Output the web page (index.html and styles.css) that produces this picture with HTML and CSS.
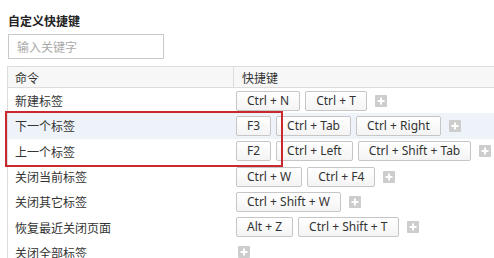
FILE: index.html
```html
<!DOCTYPE html>
<html lang="zh-CN">
<head>
<meta charset="utf-8">
<title>自定义快捷键</title>
<link rel="stylesheet" href="styles.css">
</head>
<body>
<div class="page">
  <div class="title">自定义快捷键</div>
  <div class="search"><span class="placeholder">输入关键字</span></div>
  <div class="table">
    <div class="thead">
      <div class="c1">命令</div>
      <div class="c2">快捷键</div>
    </div>
    <div class="row">
      <div class="c1">新建标签</div>
      <div class="c2 keys"><span class="key">Ctrl + N</span><span class="key">Ctrl + T</span><svg class="plus" viewBox="0 0 12 12"><rect width="12" height="12" rx="1" fill="#cdcdcd"/><path d="M5 2.5h2v2.5h2.5v2h-2.5v2.5h-2v-2.5h-2.5v-2h2.5z" fill="#fff"/></svg></div>
    </div>
    <div class="row hl">
      <div class="c1">下一个标签</div>
      <div class="c2 keys"><span class="key">F3</span><span class="key">Ctrl + Tab</span><span class="key">Ctrl + Right</span><svg class="plus" viewBox="0 0 12 12"><rect width="12" height="12" rx="1" fill="#cdcdcd"/><path d="M5 2.5h2v2.5h2.5v2h-2.5v2.5h-2v-2.5h-2.5v-2h2.5z" fill="#fff"/></svg></div>
    </div>
    <div class="row">
      <div class="c1">上一个标签</div>
      <div class="c2 keys"><span class="key">F2</span><span class="key">Ctrl + Left</span><span class="key">Ctrl + Shift + Tab</span><svg class="plus" viewBox="0 0 12 12"><rect width="12" height="12" rx="1" fill="#cdcdcd"/><path d="M5 2.5h2v2.5h2.5v2h-2.5v2.5h-2v-2.5h-2.5v-2h2.5z" fill="#fff"/></svg></div>
    </div>
    <div class="row">
      <div class="c1">关闭当前标签</div>
      <div class="c2 keys"><span class="key">Ctrl + W</span><span class="key">Ctrl + F4</span><svg class="plus" viewBox="0 0 12 12"><rect width="12" height="12" rx="1" fill="#cdcdcd"/><path d="M5 2.5h2v2.5h2.5v2h-2.5v2.5h-2v-2.5h-2.5v-2h2.5z" fill="#fff"/></svg></div>
    </div>
    <div class="row">
      <div class="c1">关闭其它标签</div>
      <div class="c2 keys"><span class="key">Ctrl + Shift + W</span><svg class="plus" viewBox="0 0 12 12"><rect width="12" height="12" rx="1" fill="#cdcdcd"/><path d="M5 2.5h2v2.5h2.5v2h-2.5v2.5h-2v-2.5h-2.5v-2h2.5z" fill="#fff"/></svg></div>
    </div>
    <div class="row">
      <div class="c1">恢复最近关闭页面</div>
      <div class="c2 keys"><span class="key">Alt + Z</span><span class="key">Ctrl + Shift + T</span><svg class="plus" viewBox="0 0 12 12"><rect width="12" height="12" rx="1" fill="#cdcdcd"/><path d="M5 2.5h2v2.5h2.5v2h-2.5v2.5h-2v-2.5h-2.5v-2h2.5z" fill="#fff"/></svg></div>
    </div>
    <div class="row">
      <div class="c1">关闭全部标签</div>
      <div class="c2 keys"><svg class="plus first" viewBox="0 0 12 12"><rect width="12" height="12" rx="1" fill="#cdcdcd"/><path d="M5 2.5h2v2.5h2.5v2h-2.5v2.5h-2v-2.5h-2.5v-2h2.5z" fill="#fff"/></svg></div>
    </div>
    <div class="mark"></div>
  </div>
</div>
</body>
</html>
```

FILE: styles.css
```css
html, body {
  margin: 0;
  padding: 0;
  background: #fff;
  overflow: hidden;
}
.page {
  padding: 13px 0 0 7px;
  font-family: "Noto Sans", "Noto Sans CJK SC", sans-serif;
  font-size: 12px;
  color: #333;
}
.title {
  font-family: "Noto Sans CJK SC", sans-serif;
  font-weight: bold;
  font-size: 12px;
  line-height: 16px;
  margin-left: 1px;
  color: #222;
}
.search {
  box-sizing: border-box;
  margin: 5px 0 0 1px;
  width: 156px;
  height: 25px;
  border: 1px solid #c9c9c9;
  padding-left: 8px;
  display: flex;
  align-items: center;
}
.placeholder {
  font-family: "Noto Sans CJK SC", sans-serif;
  color: #aaa;
  font-size: 12px;
}
.table {
  position: relative;
  margin-top: 7px;
  width: 487px;
  border-left: 1px solid #dcdcdc;
}
.thead {
  display: flex;
  height: 22px;
  box-sizing: border-box;
  border-top: 1px solid #dcdcdc;
  border-bottom: 1px solid #dcdcdc;
  background: #f7f7f7;
  align-items: stretch;
}
.thead .c1, .thead .c2 {
  display: flex;
  align-items: center;
  font-family: "Noto Sans CJK SC", sans-serif;
}
.c1 {
  box-sizing: border-box;
  width: 225px;
  flex: none;
  padding-left: 7px;
  font-family: "Noto Sans CJK SC", sans-serif;
  white-space: nowrap;
}
.thead .c2 {
  border-left: 1px solid #dcdcdc;
  padding-left: 8px;
  flex: 1;
}
.row {
  display: flex;
  align-items: center;
  height: 25.3px;
}
.row.hl {
  background: #eef3fa;
}
.keys {
  display: flex;
  align-items: center;
  gap: 5px;
  padding-left: 3px;
}
.key {
  box-sizing: border-box;
  height: 20px;
  line-height: 18px;
  padding: 0 10px;
  border: 1px solid #c6c6c6;
  border-radius: 2px;
  background: linear-gradient(#ffffff, #f4f4f4);
  color: #333;
  white-space: nowrap;
}
.plus {
  width: 12px;
  height: 12px;
  margin-left: 3px;
  flex: none;
}
.plus.first {
  margin-left: 2px;
}
.mark {
  position: absolute;
  left: -3px;
  top: 45px;
  width: 278px;
  height: 56px;
  box-sizing: border-box;
  border: 2px solid #c8282e;
}
```
